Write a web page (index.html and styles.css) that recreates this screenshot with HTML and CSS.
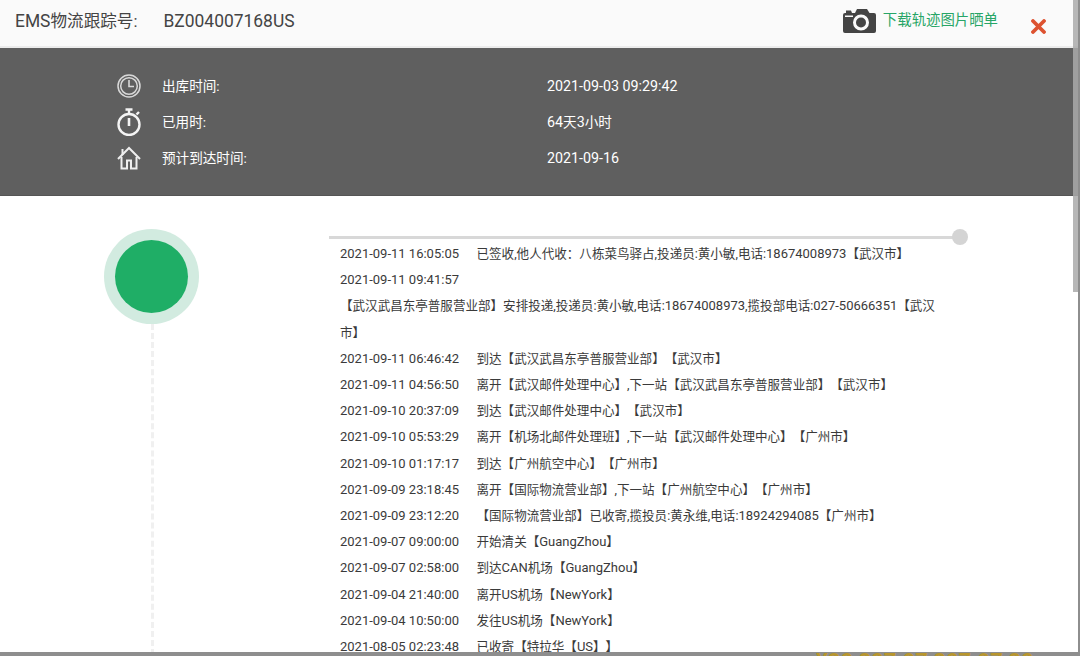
FILE: index.html
```html
<!DOCTYPE html>
<html lang="zh-CN">
<head>
    <meta charset="UTF-8">
    <title>EMS物流跟踪</title>
    <link rel="stylesheet" href="styles.css">
</head>
<body>
    <div class="modal">
        <div class="header">
            <div class="title"><span class="latin">EMS</span>物流跟踪号:<span class="latin track-no">BZ004007168US</span></div>
            <a class="download">
                <svg class="camera" viewBox="0 0 33 24" width="33" height="24">
                    <path fill="#444" fill-rule="evenodd" d="M3 1.500h5l1 2.500h3L14 0h10l2.500 4H31a2 2 0 0 1 2 2v16a2 2 0 0 1-2 2H2a2 2 0 0 1-2-2V6a2 2 0 0 1 2-2h1zM18 5.500a8 8 0 1 0 0 16 8 8 0 0 0 0-16zM2 6.500V8h8V6.500z"/>
                    <circle cx="18" cy="13.500" r="5" fill="#444"/>
                </svg>
                下载轨迹图片晒单
            </a>
            <svg class="close" viewBox="0 0 15 15" width="15" height="15">
                <path d="M2 2l11 11M13 2L2 13" stroke="#dd5230" stroke-width="3.800" stroke-linecap="round"/>
            </svg>
        </div>

        <div class="info">
            <div class="info-row">
                <svg class="info-icon" viewBox="0 0 24 24" width="24" height="24" fill="none" stroke="#d8d8d8">
                    <circle cx="12" cy="12" r="11" stroke-width="1.500"/>
                    <circle cx="12" cy="12" r="8.300" stroke-width="1.500"/>
                    <path d="M12 6v6.500h5" stroke-width="1.600"/>
                </svg>
                <span class="info-label">出库时间:</span>
                <span class="latin">2021-09-03 09:29:42</span>
            </div>
            <div class="info-row">
                <svg class="info-icon" viewBox="0 0 24 28" width="24" height="28" fill="none" stroke="#f4f4f4">
                    <circle cx="12" cy="16.500" r="10.500" stroke-width="2.400"/>
                    <path d="M8.500 1.500h7M12 1.500v4" stroke-width="2.400"/>
                    <path d="M19.500 6.500l2.500-2.500" stroke-width="2.400"/>
                    <path d="M12 10v8" stroke-width="2.600"/>
                </svg>
                <span class="info-label">已用时:</span>
                <span><span class="latin">64</span>天<span class="latin">3</span>小时</span>
            </div>
            <div class="info-row">
                <svg class="info-icon" viewBox="0 0 24 24" width="24" height="24" fill="none" stroke="#eee" stroke-width="2">
                    <path d="M1 13L12 2l11 11"/>
                    <path d="M5.500 3v6"/>
                    <path d="M4.500 11v11.500h5.500v-8h4v8h5.500V11"/>
                </svg>
                <span class="info-label">预计到达时间:</span>
                <span class="latin">2021-09-16</span>
            </div>
        </div>

        <div class="content">
            <div class="status">
                <div class="status-ring"><div class="status-dot"></div></div>
                <div class="status-line"></div>
            </div>
            <div class="track">
                <div class="track-top"><div class="track-bar"></div><div class="track-end"></div></div>
                <ul class="track-list">
                    <li><span class="latin time">2021-09-11 16:05:05</span>已签收,他人代收：八栋菜鸟驿占,投递员:黄小敏,电话:<span class="latin">18674008973</span>【武汉市】</li>
                    <li><span class="latin time">2021-09-11 09:41:57</span><br>【武汉武昌东亭普服营业部】安排投递,投递员:黄小敏,电话:<span class="latin">18674008973</span>,揽投部电话:<span class="latin">027-50666351</span>【武汉市】</li>
                    <li><span class="latin time">2021-09-11 06:46:42</span>到达【武汉武昌东亭普服营业部】【武汉市】</li>
                    <li><span class="latin time">2021-09-11 04:56:50</span>离开【武汉邮件处理中心】,下一站【武汉武昌东亭普服营业部】【武汉市】</li>
                    <li><span class="latin time">2021-09-10 20:37:09</span>到达【武汉邮件处理中心】【武汉市】</li>
                    <li><span class="latin time">2021-09-10 05:53:29</span>离开【机场北邮件处理班】,下一站【武汉邮件处理中心】【广州市】</li>
                    <li><span class="latin time">2021-09-10 01:17:17</span>到达【广州航空中心】【广州市】</li>
                    <li><span class="latin time">2021-09-09 23:18:45</span>离开【国际物流营业部】,下一站【广州航空中心】【广州市】</li>
                    <li><span class="latin time">2021-09-09 23:12:20</span>【国际物流营业部】已收寄,揽投员:黄永维,电话:<span class="latin">18924294085</span>【广州市】</li>
                    <li><span class="latin time">2021-09-07 09:00:00</span>开始清关【<span class="latin">GuangZhou</span>】</li>
                    <li><span class="latin time">2021-09-07 02:58:00</span>到达<span class="latin">CAN</span>机场【<span class="latin">GuangZhou</span>】</li>
                    <li><span class="latin time">2021-09-04 21:40:00</span>离开<span class="latin">US</span>机场【<span class="latin">NewYork</span>】</li>
                    <li><span class="latin time">2021-09-04 10:50:00</span>发往<span class="latin">US</span>机场【<span class="latin">NewYork</span>】</li>
                    <li><span class="latin time">2021-08-05 02:23:48</span>已收寄【特拉华【<span class="latin">US</span>】】</li>
                </ul>
            </div>
        </div>
        <div class="scrollbar"></div>
    </div>
    <div class="backdrop-text">¥20,807.97,807.97,80</div>
</body>
</html>
```

FILE: styles.css
```css
body {
    margin: 0;
    height: 656px;
    overflow: hidden;
    position: relative;
    background: #8e8e8e;
    font-family: Roboto, "Noto Sans CJK SC", sans-serif;
    font-size: 13px;
    color: #3a3a3a;
    text-spacing-trim: space-all;
}

/* digits and latin letters sit a bit larger than the chinese text */
.latin {
    font-size: 1.050em;
    line-height: 1;
}

.modal {
    width: 1078px;
    height: 652px;
    overflow: hidden;
    position: relative;
    background: #fff;
}

.header {
    height: 46px;
    display: flex;
    align-items: flex-start;
    background: #fafafa;
    border-bottom: 2px solid #ececec;
}

.title {
    flex: 1;
    padding: 10px 0 0 15px;
    font-size: 16.600px;
    line-height: 24px;
    color: #444;
}

.track-no {
    margin-left: 26px;
}

.download {
    display: flex;
    align-items: flex-start;
    gap: 7px;
    padding-top: 9px;
    font-size: 14.400px;
    line-height: 24px;
    color: #27a566;
}

.close {
    margin: 19px 32px 0 33px;
}

.info {
    height: 148px;
    box-sizing: border-box;
    padding: 20px 0 0 117px;
    background: #5f5f5f;
    border-bottom: 1px solid #555;
    font-size: 13.600px;
    color: #fff;
}

.info-row {
    display: flex;
    align-items: center;
    height: 36px;
}

.info-row > span {
    line-height: 20px;
}

.info-icon {
    flex-shrink: 0;
}

.info-label {
    width: 385px;
    margin-left: 21px;
}

.content {
    display: flex;
}

.status {
    width: 329px;
    padding: 33px 0 0 104px;
    box-sizing: border-box;
}

.status-ring {
    width: 95px;
    height: 95px;
    box-sizing: border-box;
    padding: 11px;
    border-radius: 50%;
    background: #d2ebe0;
}

.status-dot {
    width: 73px;
    height: 73px;
    border-radius: 50%;
    background: #1fae66;
}

.status-line {
    height: 340px;
    margin-left: 47px;
    border-left: 3px dashed #f0f0f0;
}

.track {
    flex: 1;
    padding-top: 33px;
}

.track-top {
    display: flex;
    align-items: center;
    width: 639px;
    height: 16px;
    margin-bottom: -4px;
}

.track-bar {
    flex: 1;
    height: 3px;
    background: #d8d8d8;
}

.track-end {
    width: 16px;
    height: 16px;
    margin-left: -1px;
    border-radius: 50%;
    background: #d4d4d4;
}

.track-list {
    list-style: none;
    margin: 0;
    padding: 0 0 0 11px;
    width: 608px;
    font-size: 12.550px;
}

.track-list li {
    line-height: 26.200px;
}

.track-list .latin {
    font-size: 13px;
}

.time {
    display: inline-block;
    margin-right: 17.500px;
}

.scrollbar {
    position: absolute;
    top: 0;
    right: 0;
    width: 5px;
    height: 292px;
    background: rgba(170, 170, 170, 0.85);
}

.backdrop-text {
    position: absolute;
    left: 816px;
    top: 649px;
    height: 7px;
    overflow: hidden;
    font-size: 22px;
    line-height: 26px;
    font-weight: 700;
    color: #b8962e;
    white-space: nowrap;
}
```
